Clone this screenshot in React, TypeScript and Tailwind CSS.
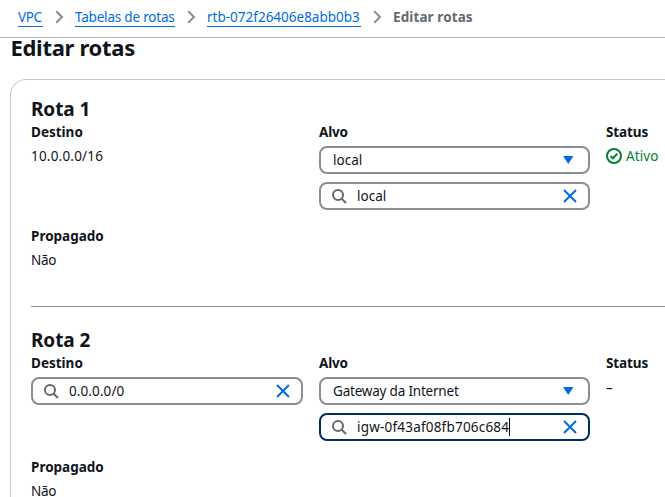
import React from 'react';

function Chevron() {
  return (
    <svg className="mt-[10px] h-[14px] w-[9px] shrink-0" viewBox="0 0 9 14" fill="none">
      <path d="M1.2 1.2 7 7l-5.8 5.8" stroke="#8c8c94" strokeWidth="2" />
    </svg>
  );
}

function SearchIcon() {
  return (
    <svg className="h-4 w-4 shrink-0" viewBox="0 0 16 16" fill="none" stroke="#656871" strokeWidth="2">
      <circle cx="7" cy="7" r="5" />
      <path d="m10.7 10.7 4.3 4.3" />
    </svg>
  );
}

function ClearIcon() {
  return (
    <svg className="h-4 w-4 shrink-0" viewBox="0 0 16 16" fill="none" stroke="#006ce0" strokeWidth="2">
      <path d="m2 2 12 12M14 2 2 14" />
    </svg>
  );
}

function SearchField({
  value,
  tracking,
  width = 'w-[271px]',
  focused = false,
}: {
  value: string;
  tracking: string;
  width?: string;
  focused?: boolean;
}) {
  return (
    <div
      className={`flex h-7 items-center rounded-lg border-2 bg-white pl-[10px] pr-[10px] ${width} ${
        focused ? 'border-[#002b66]' : 'border-[#8c8c94]'
      }`}
    >
      <SearchIcon />
      <span className={`ml-[10px] whitespace-nowrap ${tracking}`}>{value}</span>
      {focused && <span className="h-[18px] w-px bg-black" />}
      <span className="ml-auto">
        <ClearIcon />
      </span>
    </div>
  );
}

function SelectField({ value, tracking }: { value: string; tracking: string }) {
  return (
    <div className="flex h-7 w-[271px] items-center justify-between rounded-lg border-2 border-[#8c8c94] bg-white pl-3 pr-[14px]">
      <span className={`whitespace-nowrap ${tracking}`}>{value}</span>
      <svg className="h-2 w-[11px]" viewBox="0 0 11 8">
        <path d="M0 0h10.5L5.25 8z" fill="#006ce0" />
      </svg>
    </div>
  );
}

function Label({ children, tracking }: { children: React.ReactNode; tracking: string }) {
  return <div className={`h-5 whitespace-nowrap text-[13.5px] font-bold leading-5 ${tracking}`}>{children}</div>;
}

interface RouteProps {
  title: string;
  destination: React.ReactNode;
  target: React.ReactNode;
  status: React.ReactNode;
}

function Route({ title, destination, target, status }: RouteProps) {
  return (
    <section className="h-[171px]">
      <h2 className="h-6 whitespace-nowrap text-[19px] font-bold leading-6 tracking-[-0.1px]">{title}</h2>
      <div className="grid h-[105px] grid-cols-[288px_287px_100px] pt-px">
        <div>
          <Label tracking="tracking-[0px]">Destino</Label>
          <div className="pt-1">{destination}</div>
        </div>
        <div>
          <Label tracking="tracking-[-0.2px]">Alvo</Label>
          <div className="flex flex-col gap-2 pt-1">{target}</div>
        </div>
        <div>
          <Label tracking="tracking-[-0.1px]">Status</Label>
          <div className="pt-1">{status}</div>
        </div>
      </div>
      <Label tracking="tracking-[0px]">Propagado</Label>
      <div className="pt-1 leading-5 tracking-[-0.3px]">Não</div>
    </section>
  );
}

export default function App() {
  return (
    <div className="h-[497px] w-[665px] overflow-hidden bg-white font-['Noto_Sans',sans-serif] text-[13.5px] leading-5 text-[#0f141a]">
      <nav className="flex h-[38px] whitespace-nowrap border-b border-[#b4b4bb] pl-[18px] text-[#006ce0]">
        <a className="mt-[7px] h-5 w-[25px] border-b border-[#006ce0] tracking-[-0.4px]">VPC</a>
        <span className="flex w-8 pl-3"><Chevron /></span>
        <a className="mt-[7px] h-5 w-[100px] border-b border-[#006ce0] tracking-[-0.2px]">Tabelas de rotas</a>
        <span className="flex w-8 pl-3"><Chevron /></span>
        <a className="mt-[7px] h-5 w-[154px] border-b border-[#006ce0] tracking-[0px]">rtb-072f26406e8abb0b3</a>
        <span className="flex w-8 pl-3"><Chevron /></span>
        <span className="mt-[7px] font-bold tracking-[0.1px] text-[#656871]">Editar rotas</span>
      </nav>
      <h1 className="h-[41px] pl-[10.5px] text-[22px] font-bold leading-[18px] tracking-[-0.3px]">Editar rotas</h1>
      <main className="ml-[10px] h-[430px] w-[700px] rounded-tl-[16px] border-l border-t border-[#c6c6cd] pl-5 pt-[17px]">
        <Route
          title="Rota 1"
          destination={<span className="tracking-[0.2px]">10.0.0.0/16</span>}
          target={
            <>
              <SelectField value="local" tracking="tracking-[0px]" />
              <SearchField value="local" tracking="tracking-[0px]" />
            </>
          }
          status={
            <div className="flex items-center gap-1 text-[#00802f]">
              <svg className="h-4 w-4" viewBox="0 0 16 16" fill="none" stroke="currentColor" strokeWidth="2">
                <circle cx="8" cy="8" r="7" />
                <path d="m4.5 8 2.3 2.3 4.5-4.5" />
              </svg>
              <span className="tracking-[0.1px]">Ativo</span>
            </div>
          }
        />
        <hr className="mb-[21px] mt-[38px] border-[#8c8c94]" />
        <Route
          title="Rota 2"
          destination={<SearchField value="0.0.0.0/0" tracking="tracking-[0.1px]" width="w-[272px]" />}
          target={
            <>
              <SelectField value="Gateway da Internet" tracking="tracking-[-0.2px]" />
              <SearchField value="igw-0f43af08fb706c684" tracking="tracking-[0.2px]" focused />
            </>
          }
          status={<span className="block pt-px">–</span>}
        />
      </main>
    </div>
  );
}
